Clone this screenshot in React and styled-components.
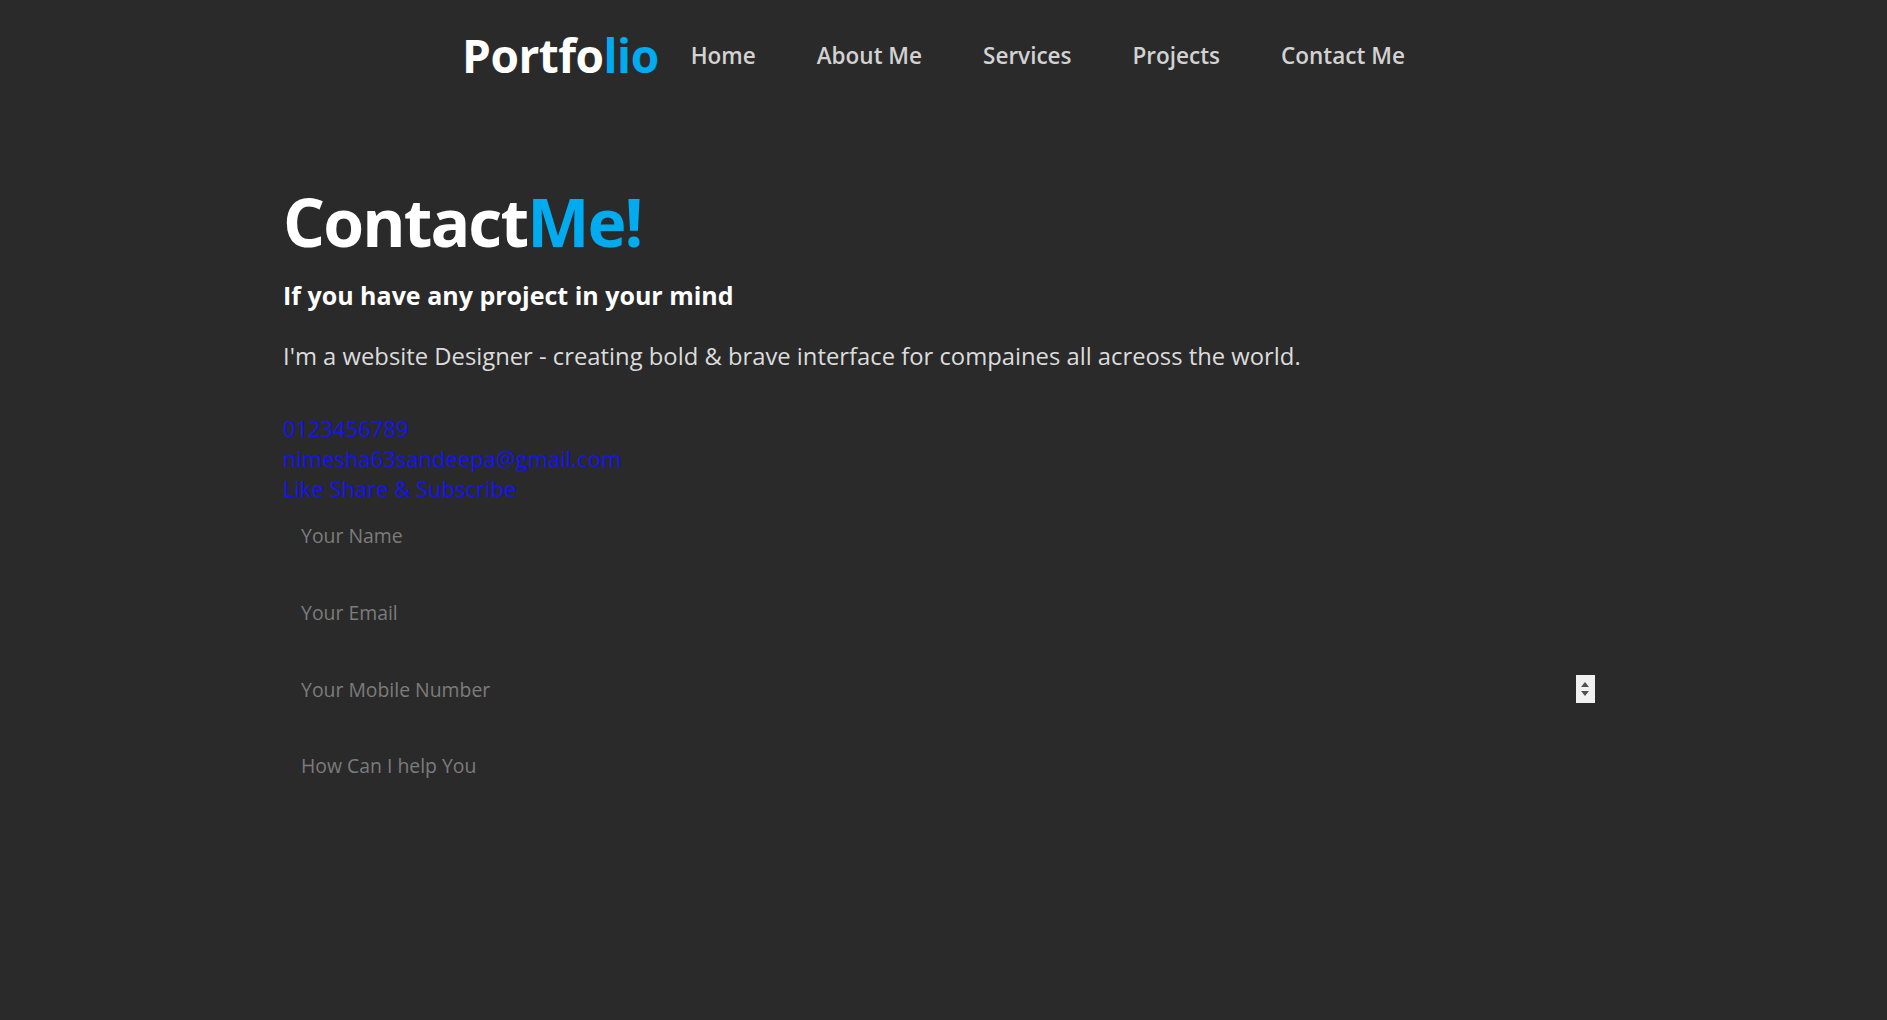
import React from "react";
import styled, { createGlobalStyle } from "styled-components";

const GlobalStyle = createGlobalStyle`
  * {
    margin: 0;
    padding: 0;
    box-sizing: border-box;
  }
  body {
    background: #2a2a2a;
    font-family: "Open Sans", "Noto Sans", sans-serif;
    color: #ededed;
  }
`;

const navLinks = ["Home", "About Me", "Services", "Projects", "Contact Me"];
const contacts = ["0123456789", "nimesha63sandeepa@gmail.com", "Like Share & Subscribe"];

const App = () => {
  return (
    <>
      <GlobalStyle />
      <Header>
        <Logo>
          Portfo<span>lio</span>
        </Logo>
        <Nav>
          {navLinks.map((l) => (
            <a key={l} href="#">
              {l}
            </a>
          ))}
        </Nav>
      </Header>
      <Section>
        <Title>
          Contact<span>Me!</span>
        </Title>
        <SubTitle>If you have any project in your mind</SubTitle>
        <Intro>
          I'm a website Designer - creating bold &amp; brave interface for compaines all acreoss
          the world.
        </Intro>
        <Links>
          {contacts.map((c) => (
            <a key={c} href="#">
              {c}
            </a>
          ))}
        </Links>
        <Form>
          <Field type="text" placeholder="Your Name" />
          <Field type="email" placeholder="Your Email" />
          <NumberWrap>
            <Field type="text" placeholder="Your Mobile Number" />
            <Spinner>
              <svg width="8" height="5" viewBox="0 0 8 5">
                <path d="M4 0 L8 5 L0 5 Z" fill="#505050" />
              </svg>
              <svg width="8" height="5" viewBox="0 0 8 5">
                <path d="M0 0 L8 0 L4 5 Z" fill="#505050" />
              </svg>
            </Spinner>
          </NumberWrap>
          <Message placeholder="How Can I help You" />
        </Form>
      </Section>
    </>
  );
};

export default App;

const Header = styled.header`
  height: 110px;
  display: flex;
  align-items: center;
  justify-content: center;
  padding-right: 20px;
`;

const Logo = styled.div`
  font-size: 46px;
  font-weight: 700;
  color: #fff;
  letter-spacing: -0.5px;
  span {
    color: #00abf0;
  }
`;

const Nav = styled.nav`
  display: flex;
  gap: 61px;
  margin-left: 32px;
  a {
    font-size: 22.5px;
    font-weight: 600;
    color: #d2d2d2;
    text-decoration: none;
  }
`;

const Section = styled.section`
  padding: 72px 15% 0;
`;

const Title = styled.h1`
  font-size: 66px;
  font-weight: 700;
  color: #fff;
  line-height: 1.2;
  letter-spacing: -1.9px;
  span {
    color: #00abf0;
  }
`;

const SubTitle = styled.h3`
  font-size: 25px;
  font-weight: 700;
  color: #fff;
  margin-top: 17px;
`;

const Intro = styled.p`
  font-size: 23.8px;
  color: #dcdcdc;
  margin-top: 28px;
`;

const Links = styled.div`
  display: flex;
  flex-direction: column;
  margin-top: 41px;
  a {
    font-size: 22px;
    line-height: 30px;
    color: #1212f4;
    text-decoration: none;
  }
`;

const Form = styled.form`
  display: flex;
  flex-direction: column;
  gap: 17px;
  margin-top: 2px;
`;

const Field = styled.input`
  width: 100%;
  height: 60px;
  padding: 0 18px;
  background: transparent;
  border: none;
  outline: none;
  font-family: inherit;
  font-size: 19.4px;
  color: #ededed;
  &::placeholder {
    color: #7c7c7c;
  }
`;

const NumberWrap = styled.div`
  position: relative;
`;

const Spinner = styled.div`
  position: absolute;
  right: 9px;
  top: 16px;
  width: 19px;
  height: 28px;
  background: #f0f0f0;
  display: flex;
  flex-direction: column;
  align-items: center;
  justify-content: center;
  gap: 4px;
`;

const Message = styled.textarea`
  width: 100%;
  height: 220px;
  padding: 16px 18px;
  background: transparent;
  border: none;
  outline: none;
  resize: none;
  font-family: inherit;
  font-size: 19.4px;
  color: #ededed;
  &::placeholder {
    color: #7c7c7c;
  }
`;
